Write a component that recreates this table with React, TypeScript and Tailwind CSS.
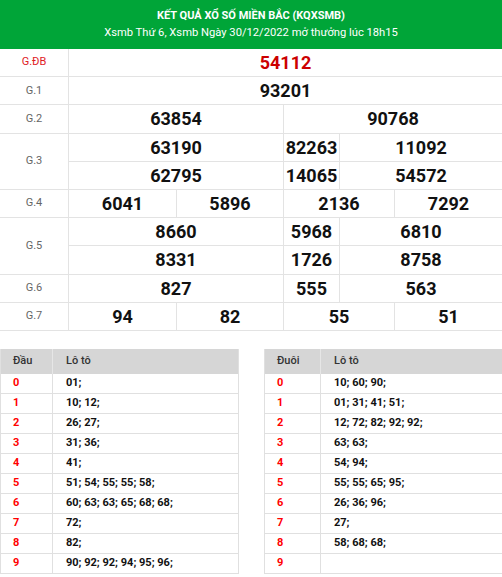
const font = { fontFamily: "Roboto, 'Liberation Sans', sans-serif" };

type Cell = { v: string; span: string };

const rows: { label: string; lines: Cell[][]; red?: boolean }[] = [
  { label: "G.ĐB", red: true, lines: [[{ v: "54112", span: "col-span-5" }]] },
  { label: "G.1", lines: [[{ v: "93201", span: "col-span-5" }]] },
  {
    label: "G.2",
    lines: [[{ v: "63854", span: "col-span-2" }, { v: "90768", span: "col-span-3" }]],
  },
  {
    label: "G.3",
    lines: [
      [{ v: "63190", span: "col-span-2" }, { v: "82263", span: "col-span-1" }, { v: "11092", span: "col-span-2" }],
      [{ v: "62795", span: "col-span-2" }, { v: "14065", span: "col-span-1" }, { v: "54572", span: "col-span-2" }],
    ],
  },
  {
    label: "G.4",
    lines: [[
      { v: "6041", span: "col-span-1" },
      { v: "5896", span: "col-span-1" },
      { v: "2136", span: "col-span-2" },
      { v: "7292", span: "col-span-1" },
    ]],
  },
  {
    label: "G.5",
    lines: [
      [{ v: "8660", span: "col-span-2" }, { v: "5968", span: "col-span-1" }, { v: "6810", span: "col-span-2" }],
      [{ v: "8331", span: "col-span-2" }, { v: "1726", span: "col-span-1" }, { v: "8758", span: "col-span-2" }],
    ],
  },
  {
    label: "G.6",
    lines: [[{ v: "827", span: "col-span-2" }, { v: "555", span: "col-span-1" }, { v: "563", span: "col-span-2" }]],
  },
  {
    label: "G.7",
    lines: [[
      { v: "94", span: "col-span-1" },
      { v: "82", span: "col-span-1" },
      { v: "55", span: "col-span-2" },
      { v: "51", span: "col-span-1" },
    ]],
  },
];

const dau = [
  "01;",
  "10; 12;",
  "26; 27;",
  "31; 36;",
  "41;",
  "51; 54; 55; 55; 58;",
  "60; 63; 63; 65; 68; 68;",
  "72;",
  "82;",
  "90; 92; 92; 94; 95; 96;",
];

const duoi = [
  "10; 60; 90;",
  "01; 31; 41; 51;",
  "12; 72; 82; 92; 92;",
  "63; 63;",
  "54; 94;",
  "55; 55; 65; 95;",
  "26; 36; 96;",
  "27;",
  "58; 68; 68;",
  "",
];

function LotoTable({ head, items, firstW, className }: { head: string; items: string[]; firstW: string; className: string }) {
  return (
    <div className={className}>
      <div className="flex h-[25px] bg-[#d6d6d6] text-[11px] font-medium text-[#333]">
        <div className={`${firstW} flex items-center pl-3 border-r border-[#e6e6e6]`}>{head}</div>
        <div className="flex items-center pl-[13px]">Lô tô</div>
      </div>
      {items.map((t, i) => (
        <div key={i} className="flex h-[20px] border-b border-[#e0e0e0] text-[11px] font-bold">
          <div className={`${firstW} flex items-center pl-3 text-[#ff0000] border-r border-[#e0e0e0]`}>{i}</div>
          <div className="flex items-center pl-[13px] text-[#111]">{t}</div>
        </div>
      ))}
    </div>
  );
}

export default function App() {
  return (
    <div className="w-[502px] bg-white" style={font}>
      <div className="h-[49px] bg-[#00a538] text-white flex flex-col items-center justify-center">
        <div className="text-[11px] font-bold leading-[15px] uppercase">KẾT QUẢ XỔ SỐ MIỀN BẮC (KQXSMB)</div>
        <div className="text-[11.2px] leading-[16px] mt-[2px]">Xsmb Thứ 6, Xsmb Ngày 30/12/2022 mở thưởng lúc 18h15</div>
      </div>

      <div className="grid grid-cols-[69px_108px_107px_56px_55px_107px] auto-rows-[28.2px]">
        {rows.map((r) => (
          <>
            <div
              key={r.label}
              className={`${r.lines.length === 2 ? "row-span-2" : ""} flex items-center justify-center border-b border-r border-[#e3e3e3] text-[11px] ${r.red ? "text-[#e0201f]" : "text-[#666]"}`}
            >
              {r.label}
            </div>
            {r.lines.map((line) =>
              line.map((c, j) => (
                <div
                  key={c.v + j}
                  className={`${c.span} flex items-center justify-center border-b border-[#e3e3e3] text-[18px] font-bold ${j < line.length - 1 ? "border-r" : ""} ${r.red ? "text-[#cc0000]" : "text-[#111]"}`}
                >
                  {c.v}
                </div>
              ))
            )}
          </>
        ))}
      </div>

      <div className="mt-[18px] flex gap-[25px]">
        <LotoTable head="Đầu" items={dau} firstW="w-[52px]" className="w-[239px] border-l border-r border-[#e0e0e0]" />
        <LotoTable head="Đuôi" items={duoi} firstW="w-[56px]" className="w-[238px] border-l border-[#e0e0e0]" />
      </div>
    </div>
  );
}
